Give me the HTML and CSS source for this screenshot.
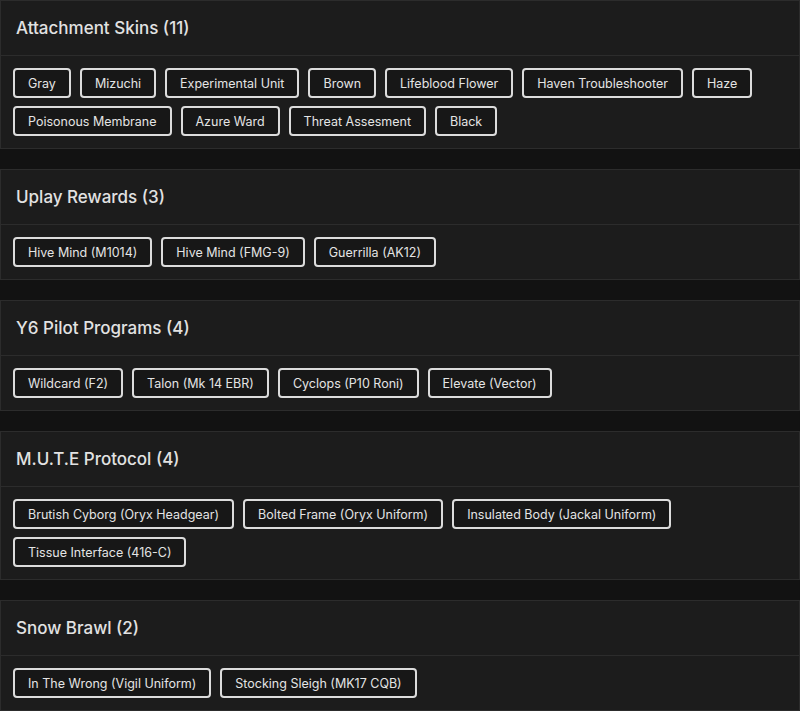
FILE: index.html
```html
<!DOCTYPE html>
<html>
<head>
<meta charset="utf-8">
<link rel="stylesheet" href="styles.css">
</head>
<body>
<div class="list">
  <section class="card">
    <header class="card-header"><h2>Attachment Skins (11)</h2></header>
    <div class="card-body">
      <span class="chip">Gray</span>
      <span class="chip">Mizuchi</span>
      <span class="chip">Experimental Unit</span>
      <span class="chip">Brown</span>
      <span class="chip">Lifeblood Flower</span>
      <span class="chip">Haven Troubleshooter</span>
      <span class="chip">Haze</span>
      <span class="chip">Poisonous Membrane</span>
      <span class="chip">Azure Ward</span>
      <span class="chip">Threat Assesment</span>
      <span class="chip">Black</span>
    </div>
  </section>
  <section class="card">
    <header class="card-header"><h2>Uplay Rewards (3)</h2></header>
    <div class="card-body">
      <span class="chip">Hive Mind (M1014)</span>
      <span class="chip">Hive Mind (FMG-9)</span>
      <span class="chip">Guerrilla (AK12)</span>
    </div>
  </section>
  <section class="card">
    <header class="card-header"><h2>Y6 Pilot Programs (4)</h2></header>
    <div class="card-body">
      <span class="chip">Wildcard (F2)</span>
      <span class="chip">Talon (Mk 14 EBR)</span>
      <span class="chip">Cyclops (P10 Roni)</span>
      <span class="chip">Elevate (Vector)</span>
    </div>
  </section>
  <section class="card">
    <header class="card-header"><h2>M.U.T.E Protocol (4)</h2></header>
    <div class="card-body">
      <span class="chip">Brutish Cyborg (Oryx Headgear)</span>
      <span class="chip">Bolted Frame (Oryx Uniform)</span>
      <span class="chip">Insulated Body (Jackal Uniform)</span>
      <span class="chip">Tissue Interface (416-C)</span>
    </div>
  </section>
  <section class="card">
    <header class="card-header"><h2>Snow Brawl (2)</h2></header>
    <div class="card-body">
      <span class="chip">In The Wrong (Vigil Uniform)</span>
      <span class="chip">Stocking Sleigh (MK17 CQB)</span>
    </div>
  </section>
</div>
</body>
</html>
```

FILE: styles.css
```css
html, body {
  margin: 0;
  padding: 0;
  background: #121212;
}
body {
  font-family: Inter, "Open Sans", "Liberation Sans", sans-serif;
  color: #e6e6e6;
}
.list {
  display: flex;
  flex-direction: column;
  gap: 20px;
}
.card {
  background: #1c1c1c;
  border: 1px solid #2c2c2c;
}
.card-header {
  height: 54px;
  display: flex;
  align-items: center;
  padding: 0 15px;
  border-bottom: 1px solid #2c2c2c;
}
.card-header h2 {
  margin: 0;
  font-size: 17px;
  font-weight: 500;
  color: #e2e2e2;
}
.card-body {
  display: flex;
  flex-wrap: wrap;
  gap: 8px 9px;
  padding: 12px 12px;
}
.chip {
  box-sizing: border-box;
  height: 30px;
  display: inline-flex;
  align-items: center;
  padding: 0 13px;
  border: 2px solid #dcdcdc;
  border-radius: 4px;
  background: #171717;
  font-size: 12.5px;
  color: #e4e4e4;
  white-space: nowrap;
}
```
